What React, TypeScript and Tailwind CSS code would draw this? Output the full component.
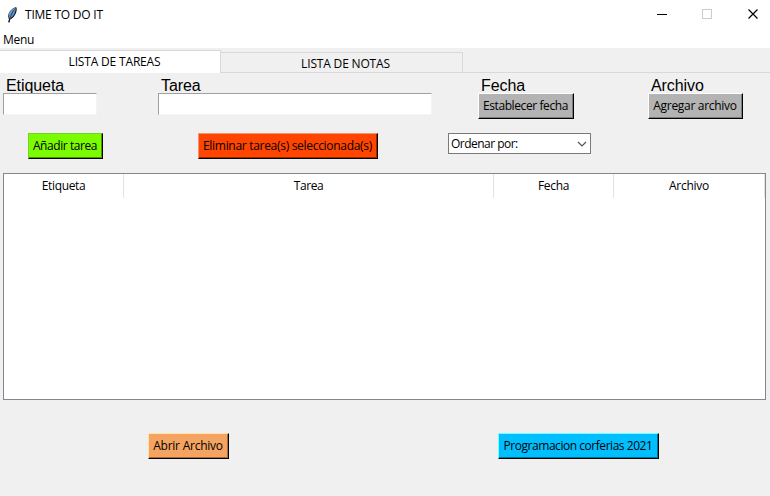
import type { ReactNode } from "react";

function Feather() {
  return (
    <svg width="12" height="18" viewBox="0 0 12 18" className="shrink-0">
      <path d="M9.600 2C7 2.600 4.300 5.200 3.300 8.300c-.6 1.800-.5 3.200.1 4.500C5.700 11.700 7.700 9.800 8.700 7c.7-2 1.200-3.700.9-5z" fill="#5b97dc" />
      <path d="M9.800 1.500C6.300 2.300 3.300 5.600 2.600 9c-.3 1.500-.1 2.800.4 3.800" stroke="#4a4f58" strokeWidth="1" fill="none" />
      <path d="M9.800 1.500c.8 1.500.1 4-.7 6C8.200 9.700 6.600 11.700 4.300 13" stroke="#15181f" strokeWidth="1.200" fill="none" />
      <path d="M8.500 3.500C6.500 6 5 9 4 12L2.800 16.200" stroke="#1b2740" strokeWidth=".8" fill="none" />
      <path d="M3.800 12.500 2.900 16.300" stroke="#111" strokeWidth="1.200" fill="none" />
    </svg>
  );
}

function TkButton({ className, edge, children }: { className: string; edge: string; children: ReactNode }) {
  return (
    <button className={`h-[26px] shrink-0 border border-r-black border-b-black ${className}`}>
      <span className={`flex h-full items-center justify-center border-r border-b whitespace-nowrap ${edge}`}>{children}</span>
    </button>
  );
}

function FieldLabel({ children }: { children: ReactNode }) {
  return (
    <div className="h-[18px] overflow-hidden pt-px pl-[3px] font-['Liberation_Sans',Arial,sans-serif] text-[16px] leading-[20px] tracking-[-0.08px] whitespace-nowrap">
      {children}
    </div>
  );
}

function Entry() {
  return <input className="block h-[22px] w-full border border-t-[#a0a0a0] border-r-[#f4f4f4] border-b-[#f4f4f4] border-l-[#a0a0a0] bg-white outline-none" />;
}

export default function App() {
  return (
    <div className="flex h-[496px] w-[770px] flex-col overflow-hidden bg-[#f0f0f0] font-['Open_Sans','Noto_Sans',sans-serif] text-[12px] leading-[16px] text-black">
      <header className="flex h-[29px] shrink-0 items-center bg-white pl-[6px]">
        <Feather />
        <h1 className="ml-[7px] grow tracking-[-0.22px]">TIME TO DO IT</h1>
        <svg width="120" height="29" viewBox="0 0 120 29" fill="none" shapeRendering="crispEdges">
          <path d="M7 14.500h10" stroke="#000" />
          <path d="M52.500 9.500h9v9h-9z" stroke="#ccc" />
          <path d="m98.500 9.500 9 9m0-9-9 9" stroke="#000" shapeRendering="auto" strokeWidth="1.200" />
        </svg>
      </header>
      <nav className="h-[19px] shrink-0 bg-white pt-[3px] pl-[3px] tracking-[-0.3px]">Menu</nav>

      <div className="flex h-[25px] shrink-0 items-end">
        <div className="h-[23px] w-[221px] border-t border-r border-[#d9d9d9] bg-white pt-[3px] pl-[9px] text-center tracking-[-0.17px]">LISTA DE TAREAS</div>
        <div className="h-[21px] w-[242px] border-t border-r border-b border-[#d9d9d9] pt-[3px] pl-[8px] text-center tracking-[-0.17px]">LISTA DE NOTAS</div>
        <div className="h-[21px] grow border-b border-[#d9d9d9]" />
      </div>

      <section className="flex h-[60px] shrink-0 pt-[2px] pl-[3px]">
        <div className="w-[155px]">
          <FieldLabel>Etiqueta</FieldLabel>
          <div className="w-[94px]"><Entry /></div>
        </div>
        <div className="w-[320px]">
          <FieldLabel>Tarea</FieldLabel>
          <div className="w-[274px]"><Entry /></div>
        </div>
        <div className="w-[170px]">
          <FieldLabel>Fecha</FieldLabel>
          <TkButton className="w-[96px] border-t-white border-l-white bg-[#b3b3b3] tracking-[-0.4px]" edge="border-[#7d7d7d]">Establecer fecha</TkButton>
        </div>
        <div>
          <FieldLabel>Archivo</FieldLabel>
          <TkButton className="w-[95px] border-t-white border-l-white bg-[#b3b3b3] tracking-[-0.3px]" edge="border-[#7d7d7d]">Agregar archivo</TkButton>
        </div>
      </section>

      <section className="flex h-[40px] shrink-0 items-start pl-[28px]">
        <TkButton className="mr-[95px] w-[75px] border-t-[#71d32b] border-l-[#71d32b] bg-[#7cfc00] tracking-[-0.42px]" edge="border-[#4a9700]">Añadir tarea</TkButton>
        <TkButton className="mr-[70px] w-[180px] border-t-[#f19573] border-l-[#f19573] bg-[#ff4500] tracking-[-0.3px]" edge="border-[#992900]">Eliminar tarea(s) seleccionada(s)</TkButton>
        <div className="flex h-[21px] w-[143px] items-center justify-between border border-[#7a7a7a] bg-white pr-[3px] pl-[2px]">
          <span className="tracking-[-0.52px]">Ordenar por:</span>
          <svg width="10" height="8" viewBox="0 0 10 8" fill="none">
            <path d="m1 2 4 4 4-4" stroke="#555" strokeWidth="1.200" />
          </svg>
        </div>
      </section>

      <section className="ml-[3px] h-[227px] w-[763px] shrink-0 border border-[#828790] bg-white">
        <div className="flex h-[24px] text-center leading-[24px]">
          <div className="w-[120px] border-r border-[#e2e2e2] tracking-[-0.35px]">Etiqueta</div>
          <div className="w-[370px] border-r border-[#e2e2e2] tracking-[-0.4px]">Tarea</div>
          <div className="w-[120px] border-r border-[#e2e2e2] tracking-[-0.3px]">Fecha</div>
          <div className="w-[151px] border-r border-[#e2e2e2] tracking-[-0.25px]">Archivo</div>
        </div>
      </section>

      <footer className="flex pt-[33px] pl-[148px]">
        <TkButton className="mr-[269px] w-[81px] border-t-[#ffe3b0] border-l-[#ffe3b0] bg-[#f4a460] tracking-[-0.25px]" edge="border-[#a66a38]">Abrir Archivo</TkButton>
        <TkButton className="w-[161px] border-t-[#73ffff] border-l-[#73ffff] bg-[#00bfff] tracking-[-0.46px]" edge="border-[#007399]">Programacion corferias 2021</TkButton>
      </footer>
    </div>
  );
}
